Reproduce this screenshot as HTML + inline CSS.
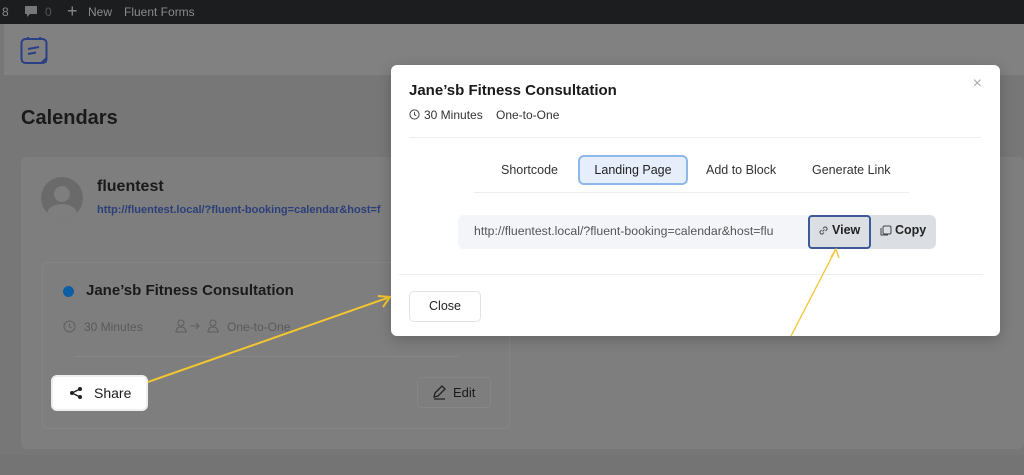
<!DOCTYPE html>
<html><head><meta charset="utf-8"><style>
*{box-sizing:border-box;margin:0;padding:0}
body{width:1024px;height:475px;overflow:hidden;background:#777;font-family:"Liberation Sans",sans-serif;position:relative}
.a{position:absolute}
</style></head><body>
<div class="a" style="left:0;top:0;width:1024px;height:24px;background:#1c1d1f;color:#8a8a8a;font-size:12px">
 <span class="a" style="left:2px;top:5px">8</span>
 <svg class="a" style="left:24px;top:5px" width="14" height="14"><path d="M1 1h12v8H6l-3 3V9H1z" fill="#777"/></svg>
 <span class="a" style="left:45px;top:5px;color:#555">0</span>
 <span class="a" style="left:67px;top:1px;font-size:18px;color:#888">+</span>
 <span class="a" style="left:88px;top:5px">New</span>
 <span class="a" style="left:124px;top:5px">Fluent Forms</span>
</div>
<div class="a" style="left:4px;top:24px;width:1020px;height:51px;background:#818181"></div>
<svg class="a" style="left:20px;top:36px" width="29" height="29" viewBox="0 0 29 29"><rect x="1.5" y="3" width="25" height="24" rx="4" fill="none" stroke="#2a3f86" stroke-width="2"/><path d="M20 27l6.5-6.5V27z" fill="#2a3f86"/><path d="M8 3V1M20 3V1" stroke="#2a3f86" stroke-width="2"/><path d="M8 13l11-2M8 18l8-1.5" stroke="#2a3f86" stroke-width="2"/></svg>
<div class="a" style="left:21px;top:107px;font-size:20px;font-weight:bold;color:#1a1a1a">Calendars</div>
<div class="a" style="left:21px;top:157px;width:1003px;height:292px;background:#7e7e7e;border-radius:6px"></div>
<div class="a" style="left:0;top:455px;width:1024px;height:20px;background:#747474"></div>
<div class="a" style="left:41px;top:177px;width:42px;height:42px;border-radius:50%;background:#6a6a6a;overflow:hidden"><div class="a" style="left:13px;top:9px;width:16px;height:16px;border-radius:50%;background:#7e7e7e"></div><div class="a" style="left:6px;top:27px;width:30px;height:20px;border-radius:50%;background:#7e7e7e"></div></div>
<div class="a" style="left:97px;top:178px;font-size:16px;font-weight:bold;color:#1a1a1a">fluentest</div>
<div class="a" style="left:97px;top:204px;font-size:11px;font-weight:bold;color:#2d3f7a;white-space:nowrap">http://fluentest.local/?fluent-booking=calendar&amp;host=f</div>
<div class="a" style="left:42px;top:262px;width:468px;height:167px;border:1px solid #858585;border-radius:6px"></div>
<div class="a" style="left:63px;top:286px;width:11px;height:11px;border-radius:50%;background:#0b5ea3"></div>
<div class="a" style="left:86px;top:282px;font-size:15px;font-weight:bold;color:#1a1a1a">Jane’sb Fitness Consultation</div>
<svg class="a" style="left:63px;top:320px" width="13" height="13"><circle cx="6.5" cy="6.5" r="5.5" fill="none" stroke="#5f5f5f"/><path d="M6.5 3.5v3l2 1.5" fill="none" stroke="#5f5f5f"/></svg>
<div class="a" style="left:84px;top:320px;font-size:12px;color:#5a5a5a">30 Minutes</div>
<svg class="a" style="left:175px;top:319px" width="46" height="14"><g fill="none" stroke="#5f5f5f" stroke-width="1.1"><circle cx="6" cy="4" r="3"/><path d="M1 13c0-3 2-5 5-5s5 2 5 5z"/><path d="M15 7h9M21 4l3 3-3 3"/><circle cx="38" cy="4" r="3"/><path d="M33 13c0-3 2-5 5-5s5 2 5 5z"/></g></svg>
<div class="a" style="left:227px;top:320px;font-size:12px;color:#5a5a5a">One-to-One</div>
<div class="a" style="left:75px;top:356px;width:384px;height:1px;background:#878787"></div>
<div class="a" style="left:51px;top:375px;width:97px;height:36px;background:#fff;border-radius:6px;border:2px solid #eee"></div>
<svg class="a" style="left:69px;top:386px" width="14" height="14"><circle cx="3" cy="7" r="2" fill="#222"/><circle cx="11" cy="3" r="2" fill="#222"/><circle cx="11" cy="11" r="2" fill="#222"/><path d="M3 7l8-4M3 7l8 4" stroke="#222" stroke-width="1.4"/></svg>
<div class="a" style="left:94px;top:385px;font-size:14px;color:#1a1a1a">Share</div>
<div class="a" style="left:417px;top:377px;width:74px;height:31px;border:1px solid #868686;border-radius:5px"></div>
<svg class="a" style="left:432px;top:384px" width="14" height="16"><path d="M2 13l1-4 7-7 3 3-7 7zM2 15h11" fill="none" stroke="#222" stroke-width="1.3"/></svg>
<div class="a" style="left:453px;top:385px;font-size:13px;color:#1a1a1a">Edit</div>
<svg class="a" style="left:0;top:0" width="1024" height="475"><path d="M148 382L390 297M378 296l12 1-7 10" fill="none" stroke="#f2c531" stroke-width="2"/></svg>
<div class="a" style="left:391px;top:65px;width:609px;height:271px;background:#fff;border-radius:6px;box-shadow:0 4px 14px rgba(0,0,0,.2)">
 <div class="a" style="left:18px;top:17px;font-size:15px;font-weight:bold;color:#1a1a1a">Jane’sb Fitness Consultation</div>
 <div class="a" style="right:18px;top:10px;font-size:16px;color:#aaa">×</div>
 <svg class="a" style="left:18px;top:44px" width="11" height="11"><circle cx="5.5" cy="5.5" r="4.6" fill="none" stroke="#444"/><path d="M5.5 3v2.7l1.7 1" fill="none" stroke="#444"/></svg>
 <div class="a" style="left:33px;top:43px;font-size:12px;color:#333">30 Minutes</div>
 <div class="a" style="left:105px;top:43px;font-size:12px;color:#333">One-to-One</div>
 <div class="a" style="left:18px;top:72px;width:572px;height:1px;background:#eee"></div>
 <div class="a" style="left:110px;top:98px;font-size:12.5px;color:#333">Shortcode</div>
 <div class="a" style="left:187px;top:90px;width:110px;height:30px;border:2px solid #8db8ec;background:#e6eefb;border-radius:6px;font-size:12.5px;color:#222;text-align:center;line-height:26px">Landing Page</div>
 <div class="a" style="left:315px;top:98px;font-size:12.5px;color:#333">Add to Block</div>
 <div class="a" style="left:421px;top:98px;font-size:12.5px;color:#333">Generate Link</div>
 <div class="a" style="left:83px;top:127px;width:435px;height:1px;background:#eee"></div>
 <div class="a" style="left:67px;top:150px;width:478px;height:34px;background:#f3f5f8;border-radius:6px"></div>
 <div class="a" style="left:83px;top:159px;font-size:12.3px;color:#555;white-space:nowrap">http://fluentest.local/?fluent-booking=calendar&amp;host=flu</div>
 <div class="a" style="left:478px;top:150px;width:67px;height:34px;background:#dbdee3;border-radius:0 6px 6px 0"></div>
 <div class="a" style="left:417px;top:150px;width:63px;height:34px;background:#dbdee3;border:2px solid #3c5a9a;border-radius:4px"></div>
 <svg class="a" style="left:427px;top:160px" width="11" height="11"><path d="M4.5 6.5l2-2M3.5 5L2 6.5a2 2 0 0 0 2.5 2.5L6 7.5M5 3.5L6.5 2A2 2 0 0 1 9 4.5L7.5 6" fill="none" stroke="#555" stroke-width="1.1"/></svg>
 <div class="a" style="left:441px;top:158px;font-size:12.5px;font-weight:bold;color:#222">View</div>
 <svg class="a" style="left:489px;top:160px" width="12" height="12"><rect x="3" y="1" width="8" height="8" rx="1.5" fill="none" stroke="#444"/><path d="M1 3v7h7" fill="none" stroke="#444"/></svg>
 <div class="a" style="left:504px;top:158px;font-size:12.5px;font-weight:bold;color:#222">Copy</div>
 <div class="a" style="left:8px;top:209px;width:584px;height:1px;background:#eee"></div>
 <div class="a" style="left:18px;top:226px;width:72px;height:31px;border:1px solid #e3e3e3;border-radius:5px;font-size:12.5px;color:#222;text-align:center;line-height:29px">Close</div>
 <svg class="a" style="left:0;top:0" width="609" height="271"><path d="M400 271L445 184M440 192l5-8 3 9" fill="none" stroke="#f2c531" stroke-width="1.3"/></svg>
</div>
</body></html>
